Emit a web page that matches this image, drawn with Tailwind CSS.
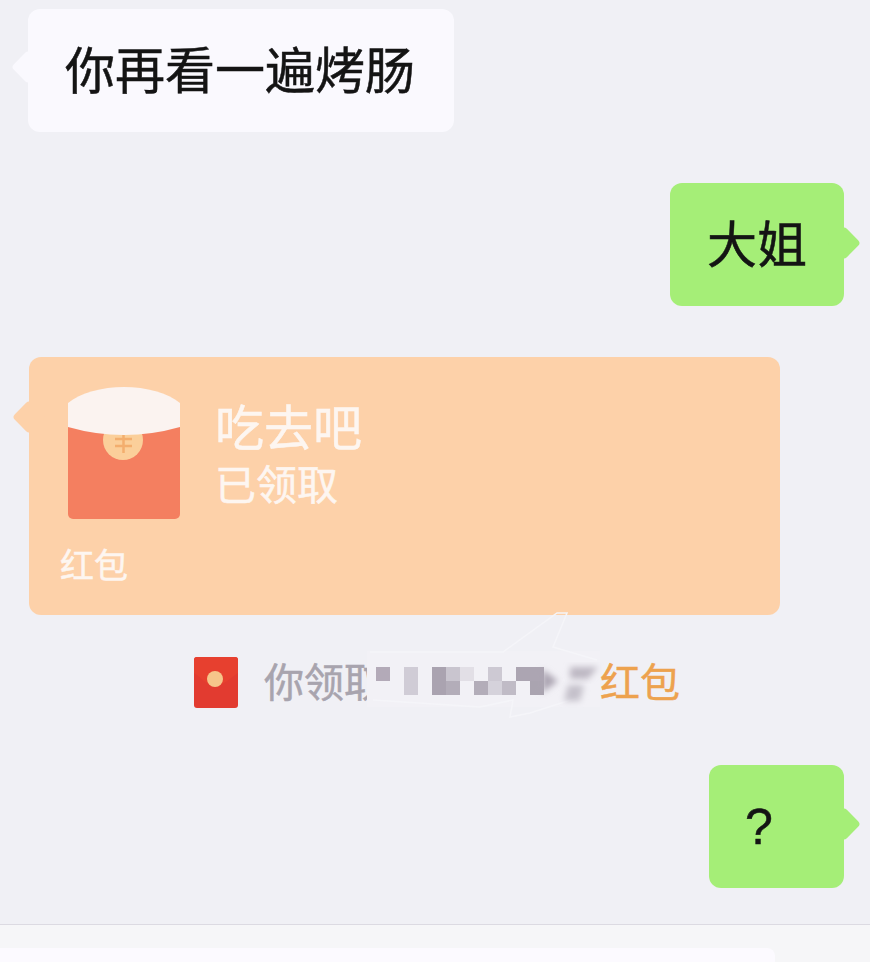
<!DOCTYPE html>
<html lang="zh-CN">
<head>
    <meta charset="UTF-8">
    <meta name="viewport" content="width=device-width, initial-scale=1.0">
    <title>聊天</title>
    <script src="https://cdn.jsdelivr.net/npm/@tailwindcss/browser@4"></script>
</head>
<body class="bg-[#f0f0f5]">
    <div class="w-[870px] h-[962px] overflow-hidden flex flex-col items-start [-webkit-text-stroke:0.5px] text-[#141414] font-['Liberation_Sans','Noto_Sans_CJK_SC',sans-serif]">

        <div class="relative mt-[9px] ml-[28px] w-[426px] h-[123px] pl-[37px] pt-[2px] flex items-center bg-[#faf9fe] rounded-xl text-[50px] leading-none">
            <span class="absolute -left-3 top-[46px] w-6 h-6 rotate-45 rounded-[4px] bg-[#faf9fe]"></span>
            <span class="relative">你再看一遍烤肠</span>
        </div>

        <div class="relative mt-[51px] ml-[670px] w-[174px] h-[123px] pl-[37px] pt-[2px] flex items-center bg-[#a5ee77] rounded-xl text-[50px] leading-none">
            <span class="absolute -right-3 top-[48px] w-6 h-6 rotate-45 rounded-[4px] bg-[#a5ee77]"></span>
            <span class="relative">大姐</span>
        </div>

        <div class="relative mt-[51px] ml-[29px] w-[751px] h-[258px] bg-[#fdd1a9] rounded-xl text-[#fdf6f1] leading-none">
            <span class="absolute -left-3 top-[48px] w-6 h-6 rotate-45 rounded-[4px] bg-[#fdd1a9]"></span>
            <div class="relative flex pt-[30px] pl-[39px] gap-[35px]">
                <svg class="w-[112px] h-[132px] shrink-0" viewBox="0 0 112 132">
                    <path d="M0 20H112V127a5 5 0 0 1-5 5H5a5 5 0 0 1-5-5Z" fill="#f47f60"/>
                    <circle cx="55" cy="53" r="20" fill="#fbcf9a"/>
                    <path d="M47 52H64M47 59H64M55.5 48V66" fill="none" stroke="#f3ae6e" stroke-width="2.5"/>
                    <path d="M0 16C12 6 34 0 56 0C78 0 100 6 112 16V40Q56 56 0 40Z" fill="#fbf3f0"/>
                </svg>
                <div class="pt-[18px]">
                    <div class="text-[49px]">吃去吧</div>
                    <div class="mt-[12px] text-[41px]">已领取</div>
                </div>
            </div>
            <div class="relative mt-[30px] pl-[31px] text-[34px]">红包</div>
        </div>

        <div class="relative mt-[42px] ml-[194px] h-[51px] flex items-center gap-[26px] text-[40px] leading-none text-[#a8a4ae]">
            <svg class="w-[44px] h-[51px] shrink-0" viewBox="0 0 44 51">
                <rect width="44" height="51" rx="3" fill="#e23b30"/>
                <path d="M0 3a3 3 0 0 1 3-3H41a3 3 0 0 1 3 3V16C34 23 28 29 21 29C14 29 10 23 0 16Z" fill="#e7402f"/>
                <circle cx="21" cy="22" r="8" fill="#f6c58a"/>
            </svg>
            <div class="flex">
                <span class="w-[336px] whitespace-nowrap">你领取了</span>
                <span class="text-[#eda24e]">红包</span>
            </div>
            <svg class="absolute left-[166px] -top-[52px]" width="260" height="125" viewBox="0 0 260 125">
                <defs>
                    <filter id="soft" x="-40%" y="-40%" width="180%" height="180%"><feGaussianBlur stdDeviation="3"/></filter>
                </defs>
                <rect x="7" y="46" width="233" height="56" fill="#f2f1f6"/>
                <path d="M10 47H143L197 8H207L193 42L237 55M13 95L120 102L153 95L150 112L170 108L220 92" fill="none" stroke="#f5f5f9" stroke-width="1.5"/>
                <g transform="translate(16 62)">
                    <rect x="0" y="0" width="14" height="14" fill="#b3aab8"/>
                    <rect x="28" y="0" width="14" height="28" fill="#d0ccd6"/>
                    <rect x="56" y="0" width="14" height="28" fill="#aaa3b0"/>
                    <rect x="70" y="0" width="14" height="14" fill="#c9c5cf"/>
                    <rect x="70" y="14" width="14" height="14" fill="#b3adb9"/>
                    <rect x="84" y="0" width="14" height="14" fill="#e2dfe6"/>
                    <rect x="98" y="14" width="14" height="14" fill="#b3adb9"/>
                    <rect x="112" y="0" width="14" height="14" fill="#cdc9d3"/>
                    <rect x="112" y="14" width="14" height="14" fill="#d5d2db"/>
                    <rect x="126" y="14" width="14" height="14" fill="#c0bbc6"/>
                    <rect x="140" y="0" width="28" height="14" fill="#aca5b2"/>
                    <rect x="154" y="14" width="14" height="14" fill="#aaa4b0"/>
                    <path d="M166 2L182 14L166 26Z" fill="#aca5b2" filter="url(#soft)"/>
                    <path d="M194 0H222L212 12H194Z" fill="#bdb8c3" filter="url(#soft)"/>
                    <path d="M192 18H208L204 34H188Z" fill="#c5c1cb" filter="url(#soft)"/>
                </g>
            </svg>
        </div>

        <div class="relative mt-[57px] ml-[709px] w-[135px] h-[123px] pl-[36px] flex items-center bg-[#a5ee77] rounded-xl text-[50px] leading-none">
            <span class="absolute -right-3 top-[47px] w-6 h-6 rotate-45 rounded-[4px] bg-[#a5ee77]"></span>
            <span class="relative">?</span>
        </div>

        <div class="mt-[36px] w-full flex-1 border-t border-[#dcdae2] bg-[#f6f6f8] pt-[23px]">
            <div class="w-[775px] h-full bg-[#fcfaff] rounded-tr-lg"></div>
        </div>
    </div>
</body>
</html>
